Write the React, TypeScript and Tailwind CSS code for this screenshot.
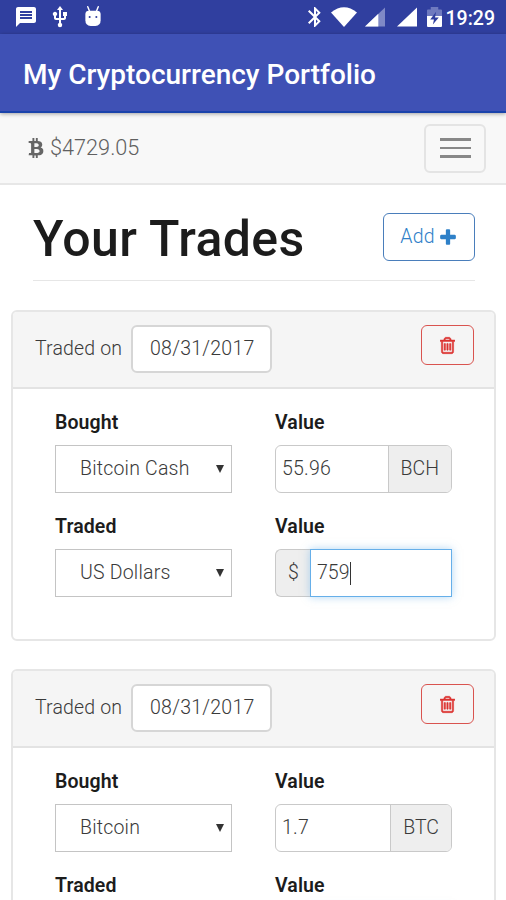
import React from 'react';
import { MdBluetooth, MdMessage, MdUsb } from 'react-icons/md';
import { FaBtc } from 'react-icons/fa';

type Trade = {
  date: string;
  bought: string;
  boughtValue: string;
  symbol: string;
  traded: string;
  tradedValue: string;
};

const trades: Trade[] = [
  {
    date: '08/31/2017',
    bought: 'Bitcoin Cash',
    boughtValue: '55.96',
    symbol: 'BCH',
    traded: 'US Dollars',
    tradedValue: '759',
  },
  {
    date: '08/31/2017',
    bought: 'Bitcoin',
    boughtValue: '1.7',
    symbol: 'BTC',
    traded: 'US Dollars',
    tradedValue: '',
  },
];

const TrashIcon = () => (
  <svg width="15" height="19" viewBox="0 0 1408 1792" fill="currentColor" stroke="currentColor" strokeWidth="50">
    <path d="M512 736v576q0 14-9 23t-23 9h-64q-14 0-23-9t-9-23V736q0-14 9-23t23-9h64q14 0 23 9t9 23zm256 0v576q0 14-9 23t-23 9h-64q-14 0-23-9t-9-23V736q0-14 9-23t23-9h64q14 0 23 9t9 23zm256 0v576q0 14-9 23t-23 9h-64q-14 0-23-9t-9-23V736q0-14 9-23t23-9h64q14 0 23 9t9 23zm128 724V512H256v948q0 22 7 40.5t14.5 27 10.5 8.5h832q3 0 10.5-8.5t14.5-27 7-40.5zM480 384h448l-48-117q-7-9-17-11H546q-10 2-17 11zm928 32v64q0 14-9 23t-23 9h-96v948q0 83-47 143.500t-113 60.500H288q-66 0-113-58.500T128 1464V512H32q-14 0-23-9t-9-23v-64q0-14 9-23t23-9h309l70-167q15-37 54-63t79-26h320q40 0 79 26t54 63l70 167h309q14 0 23 9t9 23z" />
  </svg>
);

const PlusIcon = () => (
  <svg width="16" height="20" viewBox="0 0 1408 1792" fill="currentColor">
    <path d="M1408 800v192q0 40-28 68t-68 28H896v416q0 40-28 68t-68 28H608q-40 0-68-28t-28-68v-416H96q-40 0-68-28T0 992V800q0-40 28-68t68-28h416V288q0-40 28-68t68-28h192q40 0 68 28t28 68v416h416q40 0 68 28t28 68z" />
  </svg>
);

const StatusBar = () => (
  <div className="flex h-[34px] items-center bg-[#303f9f] text-white">
    <MdMessage className="ml-[14px] size-[24px]" />
    <MdUsb className="ml-[10px] size-[24px]" />
    <svg className="ml-[11px] mb-[2px]" width="20" height="21" viewBox="0 0 20 22">
      <path d="M4.500 0.800l2 5M15.500 0.800l-2 5" stroke="#fff" strokeWidth="1.500" strokeLinecap="round" />
      <path d="M2 8.500q0-3.500 4-3.500h8q4 0 4 3.500v6.500q0 5.500-5.500 6h-5q-5.500-.5-5.500-6z" fill="#fff" />
      <circle cx="6.500" cy="11.500" r="1.100" fill="#303f9f" />
      <circle cx="13.500" cy="11.500" r="1.100" fill="#303f9f" />
    </svg>
    <MdBluetooth className="ml-auto size-[24px]" />
    <svg className="ml-[4px]" width="26" height="20" viewBox="0 0 26 20">
      <path d="M0 5.500Q13-5 26 5.500L13 20z" fill="#fff" />
    </svg>
    <svg className="ml-[8px]" width="20" height="20" viewBox="0 0 21 20">
      <path d="M0 20L21 0v20z" fill="#7f89c6" />
      <path d="M0 20L14 6.700V20z" fill="#fff" />
    </svg>
    <svg className="ml-[12px]" width="20" height="20" viewBox="0 0 21 20">
      <path d="M0 20L21 0v20z" fill="#fff" />
    </svg>
    <svg className="ml-[10px]" width="15" height="20" viewBox="0 0 14 21" preserveAspectRatio="none">
      <path d="M0 3.500q0-1 1-1h2.500V0h7v2.500h2.500q1 0 1 1V11H0z" fill="#6f7abf" />
      <path d="M0 9.500h14V20q0 1-1 1H1q-1 0-1-1z" fill="#fff" />
      <path d="M8.500 5L3 13h3.500l-1 5.500L11 11H7.500z" fill="#303f9f" />
    </svg>
    <span className="mt-[3px] mr-[11px] ml-[4px] text-[19.500px] leading-none font-medium">19:29</span>
  </div>
);

const Label = ({ children }: { children: React.ReactNode }) => (
  <div className="mb-[9px] h-[26px] text-[19.500px] leading-[26px] font-semibold tracking-[0.100px] text-[#1c1c1c]">{children}</div>
);

const Select = ({ value }: { value: string }) => (
  <div className="flex h-[48px] items-center border-[1.500px] border-[#c4c4c4] bg-white pr-[7px] pb-px pl-[24px] tracking-[0.200px]">
    <span className="flex-1">{value}</span>
    <svg width="8" height="8" viewBox="0 0 8 8" className="mt-px">
      <path d="M0 0h8L4 8z" fill="#333" />
    </svg>
  </div>
);

const TradeCard = ({ trade }: { trade: Trade }) => (
  <div className="mb-[28px] h-[331px] overflow-hidden rounded-[6px] border-2 border-[#e6e6e6] bg-white">
    <div className="flex h-[77px] items-start border-b-2 border-[#e3e3e3] bg-[#f5f5f5] pt-[13px] pr-[20px] pl-[22px]">
      <span className="mt-[11px] w-[96px] tracking-[0.150px] whitespace-nowrap">Traded on</span>
      <div className="h-[48px] w-[141px] rounded-[6px] border-2 border-[#d6d6d6] bg-white pt-[9px] pl-[17px] tracking-[0.250px]">
        {trade.date}
      </div>
      <button className="ml-auto flex h-[40px] w-[53px] items-center justify-center rounded-[6px] border-[1.500px] border-[#d9534f] text-[#dc3431]">
        <TrashIcon />
      </button>
    </div>
    <div className="grid grid-cols-[177px_177px] gap-x-[43px] gap-y-[21px] pt-[21px] pl-[42px]">
      <div>
        <Label>Bought</Label>
        <Select value={trade.bought} />
      </div>
      <div>
        <Label>Value</Label>
        <div className="flex h-[48px] items-stretch overflow-hidden rounded-[6px] border-[1.500px] border-[#c9c9c9] leading-[45px]">
          <span className="flex-1 pl-[6px] tracking-[0.200px]">{trade.boughtValue}</span>
          <span className="border-l border-[#c9c9c9] bg-[#eeeeee] px-[12px]">{trade.symbol}</span>
        </div>
      </div>
      <div>
        <Label>Traded</Label>
        <Select value={trade.traded} />
      </div>
      <div>
        <Label>Value</Label>
        <div className="flex h-[48px] leading-[45px]">
          <span className="w-[35px] rounded-l-[6px] border border-r-0 border-[#c9c9c9] bg-[#eeeeee] pl-[12px]">$</span>
          <div className="flex flex-1 items-center border-[1.500px] border-[#66afe9] bg-white pb-px pl-[6px] shadow-[0_0_8px_rgba(102,175,233,0.5)]">
            {trade.tradedValue}
            <span className="mt-[2px] ml-px h-[23px] w-px bg-[#333]" />
          </div>
        </div>
      </div>
    </div>
  </div>
);

export default function App() {
  return (
    <div className="h-[900px] w-[506px] overflow-hidden bg-white font-['Roboto',sans-serif] text-[19.500px] leading-[26px] font-[350] text-[#3a3a3a]">
      <StatusBar />
      <header className="relative flex h-[79px] items-center border-b-2 border-[#1a43ab] bg-[#3f51b5] pl-[23px] shadow-[0_1px_4px_rgba(0,0,0,0.35)]">
        <h1 className="mt-[5px] text-[28px] leading-none font-medium whitespace-nowrap text-white">My Cryptocurrency Portfolio</h1>
      </header>
      <nav className="flex h-[72px] items-center justify-between border-b-2 border-[#e7e7e7] bg-[#f8f8f8] pr-[20px] pl-[26px] text-[#666]">
        <div className="flex items-center gap-[4px]">
          <FaBtc className="size-[20px]" />
          <span className="text-[21.700px] text-[#606060]">$4729.05</span>
        </div>
        <button className="flex h-[49px] w-[62px] flex-col items-center justify-center gap-[6px] rounded-[6px] border-2 border-[#e4e4e4]">
          <span className="h-[2.500px] w-[31px] bg-[#888]" />
          <span className="h-[2.500px] w-[31px] bg-[#888]" />
          <span className="h-[2.500px] w-[31px] bg-[#888]" />
        </button>
      </nav>
      <div className="mr-[31px] ml-[33px] flex h-[96px] items-start justify-between border-b border-[#e6e6e6] pt-[28px]">
        <h2 className="-mt-px text-[50px] leading-[54px] font-medium tracking-[0.400px] whitespace-nowrap text-[#1c1c1c]">Your Trades</h2>
        <button className="flex h-[48px] w-[92px] items-center justify-center gap-[5px] rounded-[6px] border-[1.500px] border-[#4a7ebb] pr-[2px] pb-px text-[#2e80c8]">
          <span className="tracking-[0.200px]">Add</span>
          <PlusIcon />
        </button>
      </div>
      <main className="mt-[29px] ml-[11px] w-[485px]">
        {trades.map((trade, i) => (
          <TradeCard key={i} trade={trade} />
        ))}
      </main>
    </div>
  );
}
